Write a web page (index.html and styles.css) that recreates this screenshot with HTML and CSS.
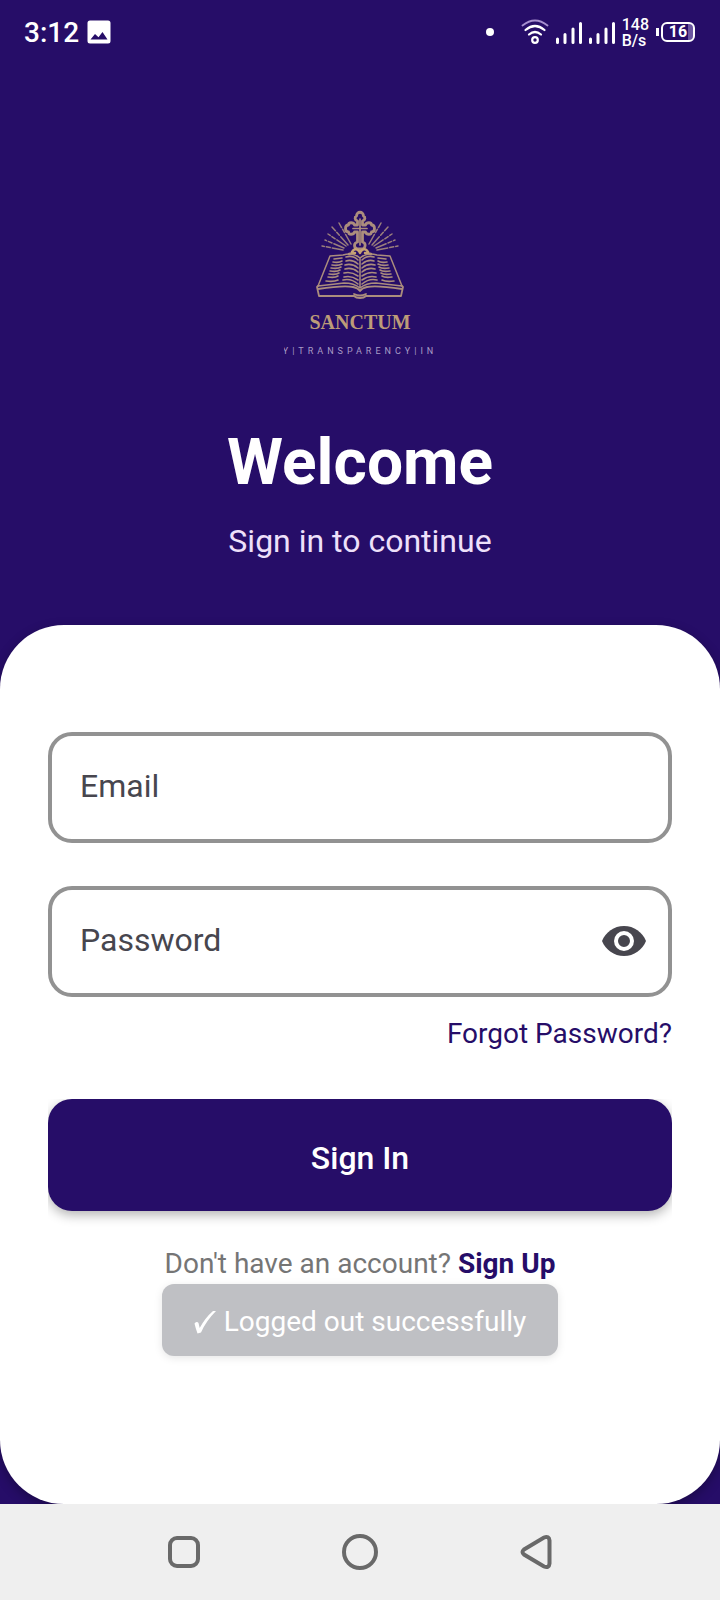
FILE: index.html
```html
<!DOCTYPE html>
<html lang="en">
<head>
<meta charset="utf-8">
<meta name="viewport" content="width=device-width, initial-scale=1">
<title>Sanctum – Sign in</title>
<link rel="stylesheet" href="styles.css">
</head>
<body>
<div class="screen">
  <div class="status">
    <div class="status-left">
      <span class="clock">3:12</span>
      <svg class="icon-photo" viewBox="0 0 24 24" aria-hidden="true"><path fill="#fff" fill-rule="evenodd" d="M3 .5h18q2.500 0 2.500 2.500v18q0 2.500-2.500 2.500H3Q.5 23.500.5 21V3Q.5.500 3 .5zM3.500 19.500h17l-5-7.500-4 5.200L8 14z"/></svg>
    </div>
    <div class="status-right">
      <span class="dot"></span>
      <svg class="icon-wifi" viewBox="0 0 28 26" fill="none" stroke="#fff" stroke-width="2.200" stroke-linecap="round" aria-hidden="true">
        <path d="M1.500 6.500Q14-3.500 26.500 6.500" stroke="#a790cf" stroke-width="1.800"/>
        <path d="M4.500 11Q14 3 23.500 11M8 15.500Q14 10.500 20 15.500"/>
        <circle cx="14" cy="21" r="2.800"/>
      </svg>
      <svg class="icon-signal" viewBox="0 0 26 22" stroke="#fff" stroke-width="3" aria-hidden="true"><path d="M1.500 17v3.500M9 12.500v8M17 7v13.500M24.500 1.500v19" stroke-linecap="round"/></svg>
      <svg class="icon-signal" viewBox="0 0 26 22" stroke="#fff" stroke-width="3" aria-hidden="true"><path d="M1.500 17v3.500M9 12.500v8M17 7v13.500M24.500 1.500v19" stroke-linecap="round"/></svg>
      <span class="speed">148<br>B/s</span>
      <span class="battery"><span class="battery-tip"></span><span class="battery-body">16</span></span>
    </div>
  </div>

  <header class="hero">
    <div class="logo">
      <svg class="emblem" viewBox="0 0 100 100" fill="none" stroke="#ab8d7d" stroke-width="1.500" stroke-linejoin="round" stroke-linecap="round" aria-hidden="true">
        <g stroke-dasharray="11 2 4 2" stroke-width="1.500" stroke="#9a7f7c">
          <path d="M41 40 29 19M38 41 22 23M36 42 18 30M34 44 15 36M33 46 12 42"/>
          <path d="M59 40 71 19M62 41 78 23M64 42 82 30M66 44 85 36M67 46 88 42"/>
        </g>
        <path fill="#260d68" stroke-width="2.800" d="M47.500 38V28h-3c-1 3-6 3-6 0-4 0-4-7 0-7 0-3 5-3 6 0h3v-4c-3-1-3-4-1-5 0-5 7-5 7 0 2 1 2 4-1 5v4h3c1-3 6-3 6 0 4 0 4 7 0 7 0 3-5 3-6 0h-3v10c4 1 3 6 0 7h-5c-4-1-4-6 0-7z"/>
        <path stroke-width="1.700" d="M50 15v26M43 24.500h14"/>
        <path stroke="#c6a374" stroke-width="2.500" d="M42 48q3-5 7-1l1 2 1-2q4-4 7 1M39 50l6-1M61 50l-6-1"/>
        <path d="M50 54Q43 48 33 51L20 52 8 82Q25 80 34 79 44 79 50 84 56 79 66 79 75 80 92 82L80 52 67 51Q57 48 50 54V84"/>
        <path d="M8 82l-1 1 2 9h35q2 2 6 2t6-2h35l2-9-1-1M8 85q26-4 35-2 5 1 7 4 2-3 7-4 9-2 35 2M44 90q6 3 12 0" stroke-width="1.800"/>
        <g stroke-width="1.600">
          <path d="M24 55l8-1M23 58q6 1 9-1M22 61q6 1 10-1M21 64q7 1 10-1M20 67q7 1 10-1M19 70q7 1 10-1M18 73q7 1 10-1M16 77q8 1 12-1"/>
          <path d="M36 53q7-2 12 3M36 57q6-2 12 3M35 61q7-2 13 3M35 65q7-2 13 3M34 69q7-2 14 3M34 73q7-2 14 3M33 76q8-2 15 4"/>
          <path d="M76 55l-8-1M77 58q-6 1-9-1M78 61q-6 1-10-1M79 64q-7 1-10-1M80 67q-7 1-10-1M81 70q-7 1-10-1M82 73q-7 1-10-1M84 77q-8 1-12-1"/>
          <path d="M64 53q-7-2-12 3M64 57q-6-2-12 3M65 61q-7-2-13 3M65 65q-7-2-13 3M66 69q-7-2-14 3M66 73q-7-2-14 3M67 76q-8-2-15 4"/>
        </g>
      </svg>
      <span class="brand">SANCTUM</span>
      <span class="motto">Y|TRANSPARENCY|IN</span>
    </div>
    <h1 class="title">Welcome</h1>
    <p class="subtitle">Sign in to continue</p>
  </header>

  <main class="card">
    <form class="form">
      <input class="field" type="email" placeholder="Email" aria-label="Email">
      <div class="password">
        <input class="field" type="password" placeholder="Password" aria-label="Password">
        <button class="reveal" type="button" aria-label="Show password">
          <svg viewBox="0 0 44 30" aria-hidden="true"><path fill="#47464e" d="M22 0C12 0 3.500 6.200 0 15c3.500 8.800 12 15 22 15s18.500-6.200 22-15C40.500 6.200 32 0 22 0z"/><circle cx="22" cy="15" r="8" fill="#47464e" stroke="#fff" stroke-width="4"/></svg>
        </button>
      </div>
      <a class="forgot" href="#">Forgot Password?</a>
      <button class="submit" type="submit">Sign In</button>
    </form>
    <p class="signup">Don't have an account? <a href="#">Sign Up</a></p>
    <div class="toast" role="status">
      <svg class="check" viewBox="0 0 22 24" aria-hidden="true"><path fill="#fff" d="M.5 13.500Q3 11 4.500 13l1.200 5Q11 8 19 1h3Q12 11 7 22.500l-3.500 1Q1.500 18 .5 13.500z"/></svg>
      <span>Logged out successfully</span>
    </div>
  </main>

  <nav class="navbar">
    <button type="button" aria-label="Recent apps"><svg viewBox="0 0 36 36" fill="none" stroke="#696969" stroke-width="4"><rect x="4" y="4" width="28" height="28" rx="7"/></svg></button>
    <button type="button" aria-label="Home"><svg viewBox="0 0 36 36" fill="none" stroke="#696969" stroke-width="4"><circle cx="18" cy="18" r="16"/></svg></button>
    <button type="button" aria-label="Back"><svg viewBox="0 0 36 36" fill="none" stroke="#696969" stroke-width="4"><path d="M6 15.500 26 3.500q5-2 5.500 3v23q-.5 5-5.500 3L6 20.500q-3-2.500 0-5z"/></svg></button>
  </nav>
</div>
</body>
</html>
```

FILE: styles.css
```css
* { box-sizing: border-box; }

body {
  margin: 0;
  font-family: Roboto, "Liberation Sans", sans-serif;
  background: #260d68;
}

.screen {
  display: flex;
  flex-direction: column;
  min-height: 100vh;
}

.status {
  display: flex;
  align-items: center;
  justify-content: space-between;
  height: 64px;
  padding: 0 25px 0 24px;
  color: #fff;
}

.status-left,
.status-right {
  display: flex;
  align-items: center;
}

.status-left { gap: 8px; }
.status-right { gap: 7px; }

.clock {
  padding-top: 2px;
  font-size: 28px;
  font-weight: 500;
  line-height: 32px;
}

.icon-photo { width: 24px; height: 24px; }

.dot {
  width: 8px;
  height: 8px;
  margin-right: 20px;
  border-radius: 50%;
  background: #fff;
}

.icon-wifi { width: 28px; height: 26px; }
.icon-signal { width: 26px; height: 22px; margin-top: 2px; }

.speed {
  padding-top: 2px;
  font-size: 16px;
  font-weight: 500;
  line-height: 16px;
}

.battery {
  display: flex;
  align-items: center;
  gap: 2px;
}

.battery-tip {
  width: 3px;
  height: 8px;
  background: #fff;
}

.battery-body {
  width: 34px;
  border: 2px solid #fff;
  border-radius: 6px;
  background: linear-gradient(90deg, transparent 83%, #6b56a0 83%);
  font-size: 16px;
  font-weight: 700;
  line-height: 16px;
  text-align: center;
}

.hero {
  display: flex;
  flex-direction: column;
  align-items: center;
  padding: 140px 24px 64px;
  color: #fff;
}

.logo {
  display: flex;
  flex-direction: column;
  align-items: center;
  width: 152px;
  overflow: hidden;
}

.emblem { width: 100px; height: 100px; }

.brand {
  margin-top: 6px;
  font-family: "Liberation Serif", serif;
  font-size: 20px;
  font-weight: 700;
  line-height: 24px;
  color: #bd9c78;
}

.motto {
  margin-top: 9px;
  font-size: 9px;
  line-height: 16px;
  letter-spacing: 4px;
  white-space: nowrap;
  color: #a99cc6;
}

.title {
  margin: 64px 0 0;
  font-size: 64px;
  font-weight: 700;
  line-height: 80px;
}

.subtitle {
  margin: 18px 0 0;
  font-size: 32px;
  line-height: 40px;
  color: #eee0fa;
}

.card {
  display: flex;
  flex: 1;
  flex-direction: column;
  align-items: center;
  padding: 107px 48px 0;
  border-radius: 64px;
  background: #fff;
  box-shadow: 0 4px 12px rgba(0, 0, 0, 0.3);
}

.form {
  display: flex;
  flex-direction: column;
  width: 100%;
}

.field {
  width: 100%;
  height: 111px;
  padding: 0 28px 3px;
  border: 4px solid #929292;
  border-radius: 24px;
  outline: 0;
  background: #fff;
  font-family: inherit;
  font-size: 32px;
  color: #47464e;
}

.field::placeholder {
  color: #47464e;
  opacity: 1;
}

.password {
  position: relative;
  margin-top: 43px;
}

.password .field {
  display: block;
  padding-right: 96px;
}

.reveal {
  position: absolute;
  top: 31px;
  right: 24px;
  display: grid;
  place-items: center;
  width: 48px;
  height: 48px;
  padding: 0;
  border: 0;
  background: none;
}

.reveal svg { width: 44px; height: 30px; }

.forgot {
  align-self: flex-end;
  margin-top: 21px;
  font-size: 28px;
  line-height: 32px;
  color: #260d68;
  text-decoration: none;
}

.submit {
  height: 112px;
  margin-top: 49px;
  padding: 6px 0 0;
  border: 0;
  border-radius: 24px;
  background: #260d68;
  box-shadow: 0 4px 12px rgba(0, 0, 0, 0.3);
  clip-path: inset(0 0 -20px);
  font-family: inherit;
  font-size: 32px;
  font-weight: 500;
  color: #fff;
}

.signup {
  margin: 37px 0 0;
  font-size: 28px;
  line-height: 32px;
  color: #757575;
}

.signup a {
  font-weight: 700;
  color: #260d68;
  text-decoration: none;
}

.toast {
  display: flex;
  align-items: center;
  gap: 8px;
  margin-top: 4px;
  padding: 22px 32px 18px;
  border-radius: 12px;
  background: #bfc0c4;
  box-shadow: 0 2px 8px rgba(0, 0, 0, 0.1);
  font-size: 28px;
  line-height: 32px;
  color: #fff;
}

.check { width: 22px; height: 24px; }

.navbar {
  display: flex;
  align-items: center;
  justify-content: center;
  gap: 140px;
  height: 96px;
  background: #efefef;
}

.navbar button {
  display: grid;
  place-items: center;
  width: 36px;
  height: 36px;
  padding: 0;
  border: 0;
  background: none;
}

.navbar svg { width: 36px; height: 36px; }
```
